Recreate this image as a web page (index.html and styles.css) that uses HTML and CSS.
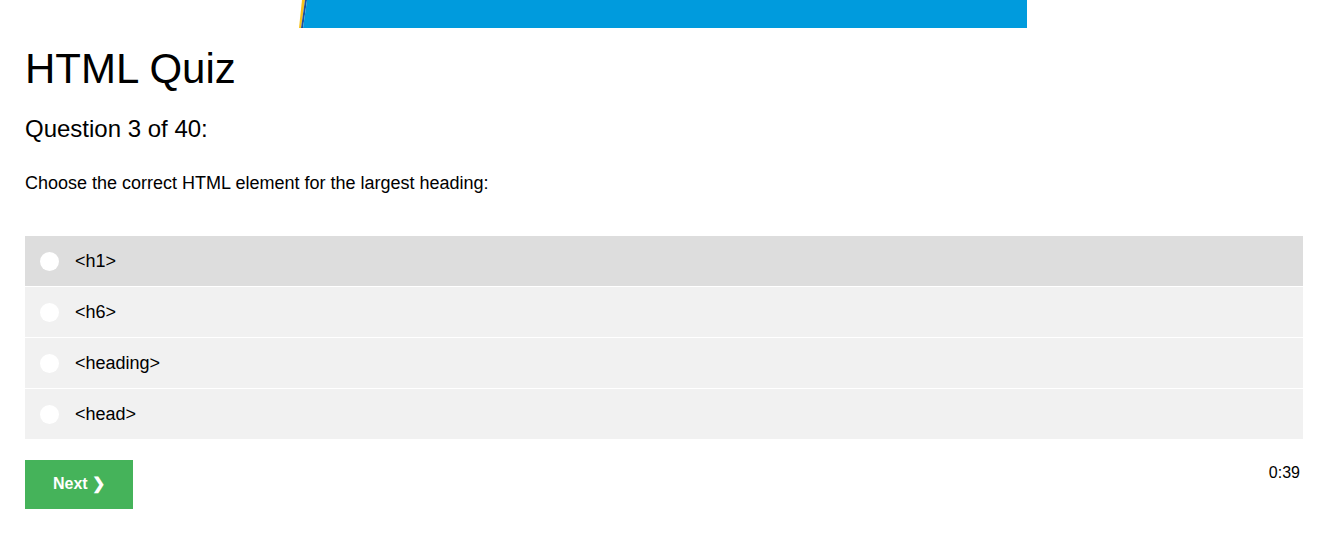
FILE: index.html
```html
<!DOCTYPE html>
<html>
<head>
<meta charset="utf-8">
<link rel="stylesheet" href="styles.css">
</head>
<body>
<div class="banner-wrap">
  <svg class="banner" width="728" height="28" viewBox="0 0 728 28">
    <polygon points="0,28 3,0 6,0 2,28" fill="#f6c21c"/>
    <polygon points="2,28 6,0 8,0 4,28" fill="#1c4f9c"/>
    <polygon points="4,28 8,0 728,0 728,28" fill="#009bdd"/>
  </svg>
</div>
<main class="quiz">
  <h1 class="title">HTML Quiz</h1>
  <h2 class="qnum">Question 3 of 40:</h2>
  <p class="qtext">Choose the correct HTML element for the largest heading:</p>
  <div class="options">
    <label class="option active"><span class="radio"></span><span class="otext">&lt;h1&gt;</span></label>
    <label class="option"><span class="radio"></span><span class="otext">&lt;h6&gt;</span></label>
    <label class="option"><span class="radio"></span><span class="otext">&lt;heading&gt;</span></label>
    <label class="option"><span class="radio"></span><span class="otext">&lt;head&gt;</span></label>
  </div>
  <div class="footer">
    <button class="next">Next <span class="chev">&#10095;</span></button>
    <span class="timer">0:39</span>
  </div>
</main>
</body>
</html>
```
FILE: styles.css
```css
* { box-sizing: border-box; }
html, body { margin: 0; padding: 0; background: #fff; }
body {
  font-family: "Liberation Sans", Arial, sans-serif;
  color: #000;
}
.banner-wrap {
  display: flex;
  padding-left: 299px;
  height: 28px;
}
.banner { display: block; }
.quiz {
  padding: 0 30px 0 25px;
}
.title {
  font-size: 42px;
  font-weight: normal;
  margin: 17px 0 0 0;
  line-height: 48px;
}
.qnum {
  font-size: 24px;
  font-weight: normal;
  margin: 22px 0 0 0;
  line-height: 28px;
}
.qtext {
  font-size: 18px;
  margin: 29px 0 0 0;
  line-height: 22px;
}
.options {
  margin-top: 42px;
  display: flex;
  flex-direction: column;
  gap: 1px;
}
.option {
  display: flex;
  align-items: center;
  height: 50px;
  background: #f1f1f1;
  padding-left: 15px;
  font-size: 18px;
}
.option.active { background: #dddddd; }
.radio {
  width: 19px;
  height: 19px;
  border-radius: 50%;
  background: #fff;
  margin-right: 16px;
}
.otext { padding-top: 1px; }
.footer {
  display: flex;
  justify-content: space-between;
  align-items: flex-start;
  margin-top: 21px;
  padding-right: 3px;
}
.next {
  width: 108px;
  height: 49px;
  background: #45b35a;
  color: #fff;
  border: none;
  font-family: "Liberation Sans", Arial, sans-serif;
  font-size: 16px;
  font-weight: bold;
  padding: 0 0 2px 0;
}
.chev { font-size: 16px; }
.timer {
  font-size: 16px;
  margin-top: 4px;
}
```
